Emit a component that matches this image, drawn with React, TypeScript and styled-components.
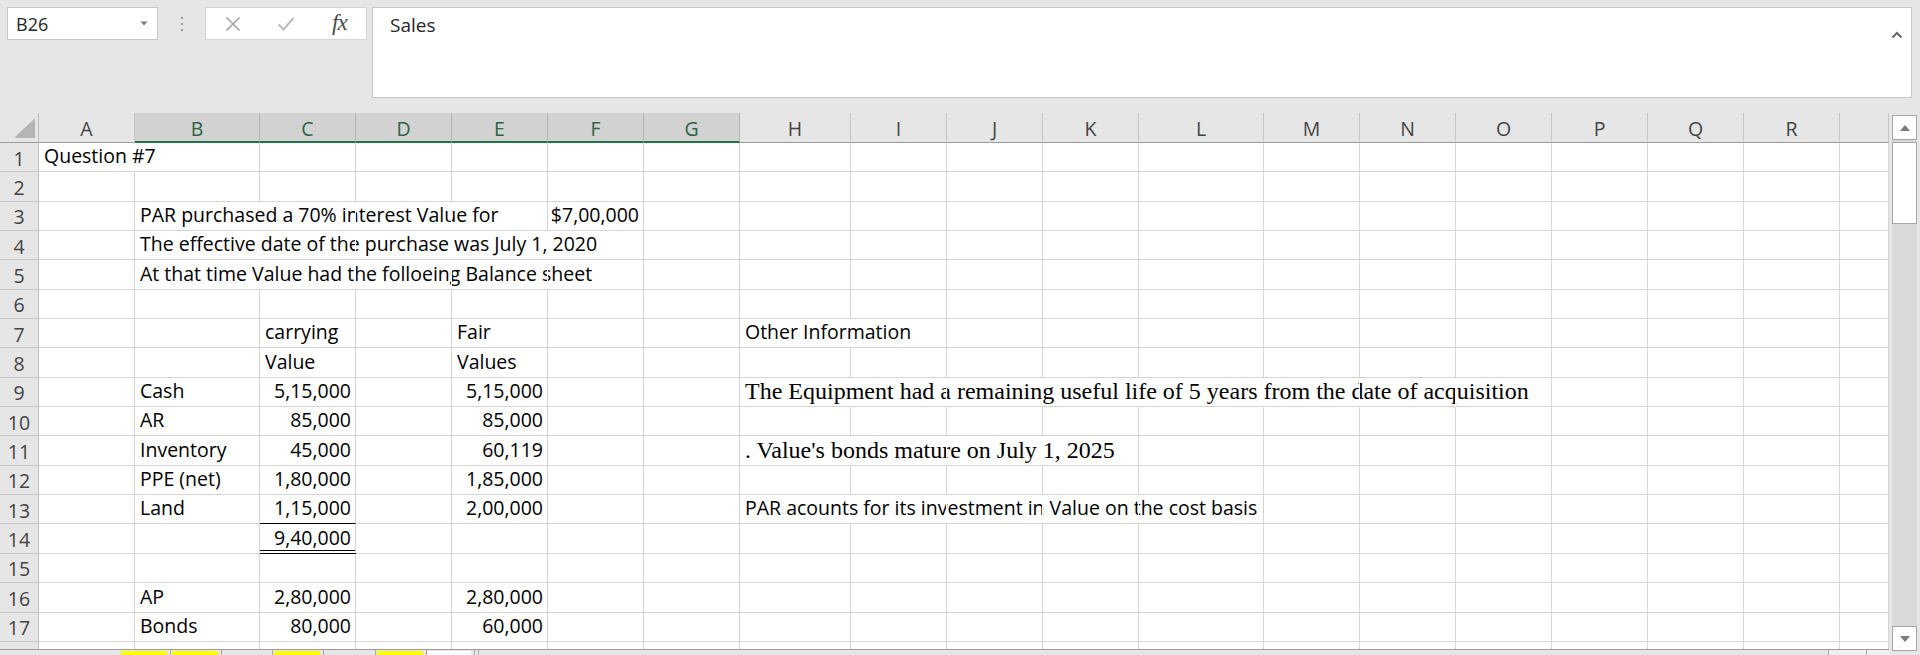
import React from 'react';
import styled, { createGlobalStyle } from 'styled-components';

const GlobalStyle = createGlobalStyle`
  html, body {
    margin: 0;
    padding: 0;
    background: #e6e6e6;
  }
  body {
    width: 1920px;
    height: 655px;
    overflow: hidden;
    font-family: "Open Sans", "Liberation Sans", sans-serif;
  }
`;

const ROW_H = 29.35;
const GRID_LINE = '#d4d4d4';
const GREEN = '#217346';
const SANS = '"Open Sans", "Liberation Sans", sans-serif';

type Col = { name: string; w: number };

const COLS: Col[] = [
  { name: 'A', w: 96 },
  { name: 'B', w: 125 },
  { name: 'C', w: 96 },
  { name: 'D', w: 96 },
  { name: 'E', w: 96 },
  { name: 'F', w: 96 },
  { name: 'G', w: 96 },
  { name: 'H', w: 111 },
  { name: 'I', w: 96 },
  { name: 'J', w: 96 },
  { name: 'K', w: 96 },
  { name: 'L', w: 125 },
  { name: 'M', w: 96 },
  { name: 'N', w: 96 },
  { name: 'O', w: 96 },
  { name: 'P', w: 96 },
  { name: 'Q', w: 96 },
  { name: 'R', w: 96 },
  { name: '', w: 49 },
];

const SELECTED = ['B', 'C', 'D', 'E', 'F', 'G'];

type CellData = {
  text: string;
  right?: boolean;
  serif?: boolean;
  span?: number; // how many columns the text runs over
  bottom?: 'single' | 'double';
};

const DATA: Record<number, Record<string, CellData>> = {
  1: { A: { text: 'Question #7', span: 2 } },
  3: {
    B: { text: 'PAR purchased a 70% interest Value for', span: 4 },
    F: { text: '$7,00,000', right: true },
  },
  4: { B: { text: 'The effective date of the purchase was July 1, 2020', span: 5 } },
  5: { B: { text: 'At that time Value had the folloeing Balance sheet', span: 5 } },
  7: {
    C: { text: 'carrying' },
    E: { text: 'Fair' },
    H: { text: 'Other Information', span: 2 },
  },
  8: { C: { text: 'Value' }, E: { text: 'Values' } },
  9: {
    B: { text: 'Cash' },
    C: { text: '5,15,000', right: true },
    E: { text: '5,15,000', right: true },
    H: {
      text: 'The Equipment had a remaining useful life of 5 years from the date of acquisition',
      serif: true,
      span: 8,
    },
  },
  10: {
    B: { text: 'AR' },
    C: { text: '85,000', right: true },
    E: { text: '85,000', right: true },
  },
  11: {
    B: { text: 'Inventory' },
    C: { text: '45,000', right: true },
    E: { text: '60,119', right: true },
    H: { text: ". Value's bonds mature on July 1, 2025", serif: true, span: 4 },
  },
  12: {
    B: { text: 'PPE (net)' },
    C: { text: '1,80,000', right: true },
    E: { text: '1,85,000', right: true },
  },
  13: {
    B: { text: 'Land' },
    C: { text: '1,15,000', right: true, bottom: 'single' },
    E: { text: '2,00,000', right: true },
    H: { text: 'PAR acounts for its investment in Value on the cost basis', span: 5 },
  },
  14: { C: { text: '9,40,000', right: true, bottom: 'double' } },
  16: {
    B: { text: 'AP' },
    C: { text: '2,80,000', right: true },
    E: { text: '2,80,000', right: true },
  },
  17: {
    B: { text: 'Bonds' },
    C: { text: '80,000', right: true },
    E: { text: '60,000', right: true },
  },
};

/* ---------- formula area ---------- */

const Page = styled.div`
  width: 1920px;
  height: 655px;
  display: flex;
  flex-direction: column;
  background: #e6e6e6;
`;

const FormulaArea = styled.div`
  height: 113px;
  flex-shrink: 0;
  box-sizing: border-box;
  padding: 7px 8px 0 7px;
  display: flex;
  align-items: flex-start;
`;

const NameBox = styled.div`
  width: 151px;
  height: 33px;
  box-sizing: border-box;
  background: #fff;
  border: 1px solid #c6c6c6;
  display: flex;
  align-items: center;
  justify-content: space-between;
  padding: 0 9px 0 8px;
  font-size: 18px;
  color: #262626;
`;

const Dots = styled.div`
  width: 47px;
  height: 33px;
  display: flex;
  align-items: center;
  justify-content: center;
`;

const FxButtons = styled.div`
  width: 162px;
  height: 33px;
  box-sizing: border-box;
  background: #fff;
  border: 1px solid #d4d4d4;
  display: flex;
`;

const FxSlot = styled.div`
  width: 54px;
  display: flex;
  align-items: center;
  justify-content: center;
`;

const FxText = styled.span`
  font-family: "Liberation Serif", serif;
  font-style: italic;
  font-size: 23px;
  color: #4a4a4a;
  letter-spacing: -1px;
  margin-top: -2px;
`;

const FormulaInput = styled.div`
  flex: 1;
  margin-left: 5px;
  height: 91px;
  box-sizing: border-box;
  background: #fff;
  border: 1px solid #c6c6c6;
  display: flex;
  justify-content: space-between;
  align-items: flex-start;
  padding: 4px 8px 0 17px;
  font-size: 19px;
  color: #262626;
`;

const Caret = styled.div`
  margin-top: 7px;
`;

/* ---------- sheet ---------- */

const Main = styled.div`
  flex: 1;
  display: flex;
`;

const LeftCol = styled.div`
  width: 1889px;
  display: flex;
  flex-direction: column;
`;

const Grid = styled.div`
  height: 536px;
  overflow: hidden;
  background: #fff;
  display: flex;
  flex-direction: column;
`;

const HeaderRow = styled.div`
  height: 30px;
  flex-shrink: 0;
  display: flex;
  background: #e6e6e6;
`;

const Corner = styled.div`
  width: 39px;
  flex-shrink: 0;
  box-sizing: border-box;
  border-right: 1px solid #bdbdbd;
  border-bottom: 1px solid #9b9b9b;
  display: flex;
  align-items: flex-end;
  justify-content: flex-end;
  padding: 0 3px 4px 0;
`;

const ColHeader = styled.div<{ $w: number; $sel: boolean }>`
  width: ${p => p.$w}px;
  flex-shrink: 0;
  box-sizing: border-box;
  background: ${p => (p.$sel ? '#d2d2d2' : '#e6e6e6')};
  border-right: 1px solid ${p => (p.$sel ? '#b4b4b4' : '#c6c6c6')};
  border-bottom: ${p => (p.$sel ? `2px solid ${GREEN}` : '1px solid #9b9b9b')};
  display: flex;
  align-items: center;
  justify-content: center;
  font-size: 19.5px;
  color: ${p => (p.$sel ? '#2d6443' : '#444')};
  padding-top: 2px;
`;

const Row = styled.div`
  height: ${ROW_H}px;
  flex-shrink: 0;
  display: flex;
`;

const RowHeader = styled.div`
  width: 39px;
  flex-shrink: 0;
  box-sizing: border-box;
  background: #e6e6e6;
  border-right: 1px solid #bdbdbd;
  border-bottom: 1px solid #c8c8c8;
  display: flex;
  align-items: center;
  justify-content: center;
  font-size: 19.5px;
  color: #444;
  padding-top: 2px;
`;

const Cell = styled.div<{
  $w: number;
  $right?: boolean;
  $open?: boolean;
  $bottom?: 'single' | 'double';
}>`
  width: ${p => p.$w}px;
  flex-shrink: 0;
  box-sizing: border-box;
  border-right: 1px solid ${p => (p.$open ? '#fff' : GRID_LINE)};
  border-bottom: ${p =>
    p.$bottom === 'double'
      ? '4px double #000'
      : p.$bottom === 'single'
      ? '1px solid #000'
      : `1px solid ${GRID_LINE}`};
  display: flex;
  align-items: flex-end;
  justify-content: ${p => (p.$right ? 'flex-end' : 'flex-start')};
  padding: 0 4px ${p => (p.$bottom === 'double' ? '1px' : '4px')} 5px;
  white-space: nowrap;
  position: relative;
`;

const CellText = styled.span<{ $serif?: boolean }>`
  font-family: ${p => (p.$serif ? '"Liberation Serif", serif' : SANS)};
  font-size: ${p => (p.$serif ? '24px' : '19.5px')};
  line-height: 22px;
  color: #000;
`;

/* ---------- sheet tabs ---------- */

const TabBar = styled.div`
  flex: 1;
  display: flex;
  border-top: 1px solid #9b9b9b;
  background: #e6e6e6;
`;

const TabNav = styled.div`
  width: 120px;
  flex-shrink: 0;
`;

const Tab = styled.div<{ $color: string; $w: number }>`
  width: ${p => p.$w}px;
  flex-shrink: 0;
  box-sizing: border-box;
  padding: 1px 3px 0 1px;
  background: ${p => p.$color};
  background-clip: content-box;
  border-right: 1px solid #aaa;
`;

const HScroll = styled.div`
  flex: 1;
  margin-left: 3px;
  box-sizing: border-box;
  border-left: 1px solid #ababab;
  display: flex;
  justify-content: flex-end;
`;

const HScrollBtn = styled.div<{ $w: number }>`
  width: ${p => p.$w}px;
  box-sizing: border-box;
  border-left: 1px solid #ababab;
  background: #f0f0f0;
`;

/* ---------- vertical scrollbar ---------- */

const VScroll = styled.div`
  width: 25px;
  margin: 2px 3px 4px 3px;
  background: #dadada;
  display: flex;
  flex-direction: column;
`;

const ScrollBtn = styled.div`
  height: 25px;
  box-sizing: border-box;
  background: #fff;
  border: 1px solid #a6a6a6;
  display: flex;
  align-items: center;
  justify-content: center;
`;

const Thumb = styled.div`
  height: 82px;
  margin-top: 2px;
  box-sizing: border-box;
  background: #fff;
  border: 1px solid #a6a6a6;
`;

const Spacer = styled.div`
  flex: 1;
`;

/* ---------- icons ---------- */

const DropArrow = () => (
  <svg width="8" height="5" viewBox="0 0 8 5">
    <path d="M0.5 0.5 L7.5 0.5 L4 4.5 Z" fill="#7a7a7a" />
  </svg>
);

const VDots = () => (
  <svg width="4" height="16" viewBox="0 0 4 16">
    <circle cx="2" cy="2" r="1.3" fill="#a6a6a6" />
    <circle cx="2" cy="8" r="1.3" fill="#a6a6a6" />
    <circle cx="2" cy="14" r="1.3" fill="#a6a6a6" />
  </svg>
);

const CancelIcon = () => (
  <svg width="16" height="16" viewBox="0 0 16 16">
    <path d="M1.5 1.5 L14.5 14.5 M14.5 1.5 L1.5 14.5" stroke="#a3a3a3" strokeWidth="1.6" />
  </svg>
);

const CheckIcon = () => (
  <svg width="18" height="16" viewBox="0 0 18 16">
    <path d="M1.5 8.5 L6.5 13.5 L16.5 2" stroke="#bdbdbd" strokeWidth="2" fill="none" />
  </svg>
);

const UpChevron = () => (
  <svg width="12" height="8" viewBox="0 0 12 8">
    <path d="M1.5 6.5 L6 2 L10.5 6.5" stroke="#6a6a6a" strokeWidth="2.2" fill="none" />
  </svg>
);

const CornerTriangle = () => (
  <svg width="21" height="20" viewBox="0 0 21 20">
    <path d="M0 20 L21 20 L21 0 Z" fill="#b4b4b4" />
  </svg>
);

const ArrowUp = () => (
  <svg width="10" height="6" viewBox="0 0 10 6">
    <path d="M0 6 L10 6 L5 0 Z" fill="#7a7a7a" />
  </svg>
);

const ArrowDown = () => (
  <svg width="10" height="6" viewBox="0 0 10 6">
    <path d="M0 0 L10 0 L5 6 Z" fill="#7a7a7a" />
  </svg>
);

/* ---------- rows ---------- */

const SheetRow: React.FC<{ n: number; label?: boolean }> = ({ n, label = true }) => {
  const cells = DATA[n] || {};
  // columns whose right gridline is hidden under overflowing text
  const open = new Set<number>();
  COLS.forEach((c, i) => {
    const d = cells[c.name];
    if (d && d.span && d.span > 1) {
      for (let k = i; k < i + d.span - 1; k++) open.add(k);
    }
  });
  return (
    <Row>
      <RowHeader>{label ? n : null}</RowHeader>
      {COLS.map((c, i) => {
        const d = cells[c.name];
        return (
          <Cell
            key={i}
            $w={c.w}
            $right={d?.right}
            $open={open.has(i)}
            $bottom={d?.bottom}
          >
            {d && <CellText $serif={d.serif}>{d.text}</CellText>}
          </Cell>
        );
      })}
    </Row>
  );
};

const TABS = [
  { color: '#ffff00', w: 51 },
  { color: '#ffff00', w: 51 },
  { color: '#e6e6e6', w: 51 },
  { color: '#ffff00', w: 51 },
  { color: '#e6e6e6', w: 52 },
  { color: '#ffff00', w: 51 },
  { color: '#ffffff', w: 48 },
];

export default function App() {
  const rows = Array.from({ length: 17 }, (_, i) => i + 1);
  return (
    <Page>
      <GlobalStyle />
      <FormulaArea>
        <NameBox>
          <span>B26</span>
          <DropArrow />
        </NameBox>
        <Dots>
          <VDots />
        </Dots>
        <FxButtons>
          <FxSlot>
            <CancelIcon />
          </FxSlot>
          <FxSlot>
            <CheckIcon />
          </FxSlot>
          <FxSlot>
            <FxText>fx</FxText>
          </FxSlot>
        </FxButtons>
        <FormulaInput>
          <span>Sales</span>
          <Caret>
            <UpChevron />
          </Caret>
        </FormulaInput>
      </FormulaArea>
      <Main>
        <LeftCol>
          <Grid>
            <HeaderRow>
              <Corner>
                <CornerTriangle />
              </Corner>
              {COLS.map((c, i) => (
                <ColHeader key={i} $w={c.w} $sel={SELECTED.includes(c.name)}>
                  {c.name}
                </ColHeader>
              ))}
            </HeaderRow>
            {rows.map(n => (
              <SheetRow key={n} n={n} />
            ))}
            <SheetRow n={18} label={false} />
          </Grid>
          <TabBar>
            <TabNav />
            {TABS.map((t, i) => (
              <Tab key={i} $color={t.color} $w={t.w} />
            ))}
            <HScroll>
              <HScrollBtn $w={38} />
              <HScrollBtn $w={23} />
            </HScroll>
          </TabBar>
        </LeftCol>
        <VScroll>
          <ScrollBtn>
            <ArrowUp />
          </ScrollBtn>
          <Thumb />
          <Spacer />
          <ScrollBtn>
            <ArrowDown />
          </ScrollBtn>
        </VScroll>
      </Main>
    </Page>
  );
}
